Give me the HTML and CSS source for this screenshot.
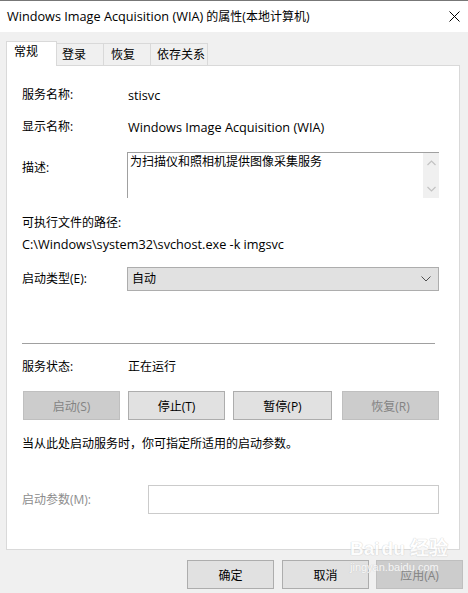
FILE: index.html
```html
<!DOCTYPE html>
<html lang="zh-CN">
<head>
<meta charset="utf-8">
<title>Windows Image Acquisition (WIA) 的属性(本地计算机)</title>
<link rel="stylesheet" href="styles.css">
</head>
<body>
<div class="window">
  <div class="titlebar">
    <span class="title"><span class="lat">Windows Image Acquisition (WIA)</span> 的属性(本地计算机)</span>
    <svg class="close" width="11" height="11" viewBox="0 0 11 11"><path d="M0.5 0.5 L10.5 10.5 M10.5 0.5 L0.5 10.5" stroke="#000" stroke-width="1" fill="none"/></svg>
  </div>
  <div class="body">
    <div class="tabs">
      <div class="tab active">常规</div>
      <div class="tab t2">登录</div>
      <div class="tab t3">恢复</div>
      <div class="tab t4">依存关系</div>
    </div>
    <div class="panel">
      <div class="row r1"><span class="label">服务名称:</span><span class="value lat">stisvc</span></div>
      <div class="row r2"><span class="label">显示名称:</span><span class="value lat">Windows Image Acquisition (WIA)</span></div>
      <div class="row desc">
        <span class="label desc-label">描述:</span>
        <div class="textarea">
          <div class="ta-text">为扫描仪和照相机提供图像采集服务</div>
          <div class="scrollbar">
            <svg width="9" height="6" viewBox="0 0 9 6"><path d="M0.5 5 L4.5 1 L8.5 5" stroke="#c2c2c2" stroke-width="1.2" fill="none"/></svg>
            <svg width="9" height="6" viewBox="0 0 9 6"><path d="M0.5 1 L4.5 5 L8.5 1" stroke="#c2c2c2" stroke-width="1.2" fill="none"/></svg>
          </div>
        </div>
      </div>
      <div class="row r4"><span>可执行文件的路径:</span></div>
      <div class="row r5"><span class="lat">C:\Windows\system32\svchost.exe -k imgsvc</span></div>
      <div class="row combo-row">
        <span class="label">启动类型(E):</span>
        <div class="combo">
          <span>自动</span>
          <svg width="10" height="6" viewBox="0 0 10 6"><path d="M0.5 0.5 L5 5 L9.5 0.5" stroke="#505050" stroke-width="1" fill="none"/></svg>
        </div>
      </div>
      <div class="separator"></div>
      <div class="row status"><span class="label">服务状态:</span><span class="value">正在运行</span></div>
      <div class="btn-row">
        <div class="btn disabled w97">启动(S)</div>
        <div class="btn w97 g8">停止(T)</div>
        <div class="btn w99 g8">暂停(P)</div>
        <div class="btn disabled w97 g10">恢复(R)</div>
      </div>
      <div class="row note"><span>当从此处启动服务时，你可指定所适用的启动参数。</span></div>
      <div class="row param-row">
        <span class="label param-label">启动参数(M):</span>
        <div class="input"></div>
      </div>
    </div>
    <div class="footer">
      <div class="btn fbtn">确定</div>
      <div class="btn fbtn">取消</div>
      <div class="btn fbtn disabled apply">应用(A)</div>
    </div>
  </div>
  <div class="watermark" aria-hidden="true">
    <div class="wm-logo">Bai<span class="paw">du</span> 经验</div>
    <div class="wm-url">jingyan.baidu.com</div>
  </div>
</div>
</body>
</html>
```
FILE: styles.css
```css
* { box-sizing: border-box; }
html, body { margin: 0; padding: 0; }
body {
  width: 468px;
  height: 593px;
  overflow: hidden;
  background: #f0f0f0;
  font-family: "Open Sans", "Noto Sans CJK SC", sans-serif;
  font-size: 12px;
  color: #000;
}
.lat { font-size: 12.7px; }
.window {
  position: relative;
  width: 468px;
  height: 593px;
  display: flex;
  flex-direction: column;
}
.titlebar {
  height: 32px;
  background: #fff;
  border-top: 1px solid #777;
  display: flex;
  align-items: center;
  justify-content: space-between;
  padding: 0 8px 0 7px;
  flex: none;
}
.title { font-size: 12px; line-height: 16px; }
.close { display: block; }
.body {
  flex: 1;
  padding: 9px 0 0 6px;
  display: flex;
  flex-direction: column;
}
.tabs {
  display: flex;
  align-items: flex-end;
  height: 24px;
  position: relative;
  z-index: 1;
}
.tab {
  height: 22px;
  border: 1px solid #d9d9d9;
  border-bottom: none;
  background: #f0f0f0;
  padding: 0 0 0 5px;
  line-height: 21px;
}
.tab.active {
  height: 25px;
  width: 51px;
  background: #fff;
  margin-bottom: -1px;
  padding-left: 7px;
  line-height: 20px;
}
.tab.t2 { width: 47px; border-left: none; }
.tab.t3 { width: 48px; margin-left: -1px; padding-left: 7px; }
.tab.t4 { width: 58px; margin-left: -1px; padding-left: 6px; }
.panel {
  width: 454px;
  height: 485px;
  background: #fff;
  border: 1px solid #d9d9d9;
  padding: 19px 20px 0 15px;
  display: flex;
  flex-direction: column;
}
.row {
  display: flex;
  align-items: center;
  height: 20px;
  line-height: 20px;
  flex: none;
}
.label { width: 106px; flex: none; }
.r2 { margin-top: 12px; }
.desc { margin-top: 15px; height: 46px; align-items: flex-start; }
.desc-label { margin-top: 6px; }
.textarea {
  width: 312px;
  height: 46px;
  margin-left: -1px;
  border-top: 1px solid #a0a0a0;
  border-left: 1px solid #a0a0a0;
  display: flex;
  justify-content: space-between;
}
.ta-text { padding: 0 0 0 2px; line-height: 18px; }
.scrollbar {
  width: 16px;
  height: 45px;
  background: #f0f0f0;
  display: flex;
  flex-direction: column;
  align-items: center;
  justify-content: space-between;
  padding: 7px 0 6px;
}
.scrollbar svg { display: block; }
.r4 { margin-top: 15px; }
.r5 { margin-top: 1px; }
.combo-row { margin-top: 13px; height: 24px; }
.combo {
  width: 312px;
  height: 24px;
  margin-left: -1px;
  background: #e1e1e1;
  border: 1px solid #adadad;
  display: flex;
  align-items: center;
  justify-content: space-between;
  padding: 0 7px 0 4px;
}
.combo svg { display: block; }
.separator {
  height: 1px;
  background: #a0a0a0;
  margin: 52px 4px 0 0;
  flex: none;
}
.status { margin-top: 13px; }
.btn-row {
  margin-top: 14px;
  margin-left: 1px;
  height: 29px;
  display: flex;
  flex: none;
}
.btn {
  height: 29px;
  background: #e1e1e1;
  border: 1px solid #adadad;
  display: flex;
  align-items: center;
  justify-content: center;
  flex: none;
}
.btn.disabled {
  background: #cccccc;
  border-color: #bfbfbf;
  color: #838383;
}
.w97 { width: 97px; }
.w99 { width: 99px; }
.g8 { margin-left: 8px; }
.g10 { margin-left: 10px; }
.note { margin-top: 14px; }
.param-row { margin-top: 31px; height: 29px; }
.param-label { width: 126px; color: #8d8d8d; }
.input {
  width: 291px;
  height: 29px;
  border: 1px solid #cbcbcb;
  background: #fff;
  margin-right: -1px;
}
.footer {
  display: flex;
  justify-content: flex-end;
  gap: 8px;
  margin-top: 10px;
  padding-right: 5px;
}
.fbtn { width: 87px; }
.fbtn.apply { margin-left: -1px; }
.watermark {
  position: absolute;
  left: 350px;
  top: 538px;
  color: #fff;
  text-shadow: 0 0 1px #c8c8c8, 0 0 1px #c8c8c8;
  opacity: 0.8;
  pointer-events: none;
}
.wm-logo { font-family: "Liberation Sans", sans-serif; font-size: 19px; font-weight: bold; line-height: 22px; }
.wm-logo .paw { margin-left: 2px; }
.wm-url { font-family: "Liberation Sans", sans-serif; font-size: 11px; line-height: 13px; margin-top: 1px; }
```
